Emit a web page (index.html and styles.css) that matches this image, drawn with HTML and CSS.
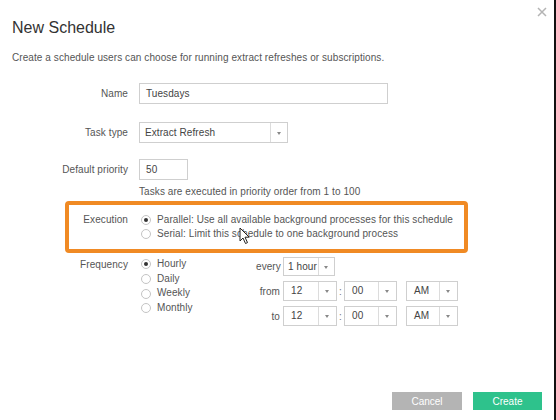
FILE: index.html
```html
<!DOCTYPE html>
<html>
<head>
<meta charset="utf-8">
<link rel="stylesheet" href="styles.css">
</head>
<body>
<div class="page">
  <button class="close" aria-label="Close">
    <svg width="10" height="10" viewBox="0 0 10 10"><path d="M1 1 L9 9 M9 1 L1 9" stroke="#b4b4b4" stroke-width="1.5"/></svg>
  </button>
  <header class="header">
    <h1 class="title">New Schedule</h1>
    <p class="desc">Create a schedule users can choose for running extract refreshes or subscriptions.</p>
  </header>

  <div class="form">
    <div class="row row-name">
      <span class="label">Name</span>
      <div class="input input-name">Tuesdays</div>
    </div>
    <div class="row row-task">
      <span class="label">Task type</span>
      <div class="sel sel-task"><span class="val">Extract Refresh</span><span class="arr"></span></div>
    </div>
    <div class="row row-prio">
      <span class="label">Default priority</span>
      <div class="input input-prio">50</div>
    </div>
    <div class="hint">Tasks are executed in priority order from 1 to 100</div>

    <div class="exec">
      <span class="label exec-label">Execution</span>
      <div class="radios">
        <div class="radio on"><span class="dot"></span>Parallel: Use all available background processes for this schedule</div>
        <div class="radio"><span class="dot"></span>Serial: Limit this schedule to one background process</div>
      </div>
    </div>

    <div class="row row-freq">
      <span class="label freq-label">Frequency</span>
      <div class="radios freq-radios">
        <div class="radio on"><span class="dot"></span>Hourly</div>
        <div class="radio"><span class="dot"></span>Daily</div>
        <div class="radio"><span class="dot"></span>Weekly</div>
        <div class="radio"><span class="dot"></span>Monthly</div>
      </div>
      <div class="times">
        <span class="tlabel">every</span>
        <div class="tcells">
          <div class="sel sel-every"><span class="val v-hour">1 hour</span><span class="arr"></span></div>
        </div>
        <span class="tlabel">from</span>
        <div class="tcells">
          <div class="sel sel-h"><span class="val">12</span><span class="arr"></span></div>
          <span class="colon">:</span>
          <div class="sel sel-m"><span class="val">00</span><span class="arr"></span></div>
          <div class="sel sel-ap"><span class="val">AM</span><span class="arr"></span></div>
        </div>
        <span class="tlabel">to</span>
        <div class="tcells">
          <div class="sel sel-h"><span class="val">12</span><span class="arr"></span></div>
          <span class="colon">:</span>
          <div class="sel sel-m"><span class="val">00</span><span class="arr"></span></div>
          <div class="sel sel-ap"><span class="val">AM</span><span class="arr"></span></div>
        </div>
      </div>
    </div>
  </div>

  <footer class="footer">
    <button class="btn btn-cancel">Cancel</button>
    <button class="btn btn-create">Create</button>
  </footer>

  <svg class="cursor" width="12" height="18" viewBox="0 0 12 18">
    <path d="M1 1 L1 14 L4 11 L6.5 16.5 L8.5 15.6 L6 10.2 L10.2 10.2 Z" fill="#fff" stroke="#222" stroke-width="1" stroke-linejoin="round"/>
  </svg>
</div>
</body>
</html>
```
FILE: styles.css
```css
* { box-sizing: border-box; }
html, body { margin: 0; padding: 0; background: #fff; }
.page {
  position: relative;
  width: 556px;
  height: 420px;
  border-right: 2px solid #111;
  display: flex;
  flex-direction: column;
  font-family: "Liberation Sans", Arial, sans-serif;
  font-size: 10px;
  letter-spacing: 0.08px;
  color: #555;
  background: #fff;
}
.close {
  position: absolute;
  top: 7px;
  right: 7px;
  border: 0;
  background: none;
  padding: 0;
  width: 10px;
  height: 10px;
  line-height: 0;
}
.header { padding: 18px 12px 0; }
.title {
  margin: 0;
  font-size: 16px;
  line-height: 20px;
  font-weight: normal;
  letter-spacing: 0;
  color: #333;
}
.desc {
  margin: 14px 0 0;
  line-height: 12px;
  color: #555;
}
.form { margin-top: 19px; }
.row { display: flex; align-items: center; }
.label {
  width: 128px;
  margin-right: 11px;
  text-align: right;
  flex: none;
  color: #555;
}
.input {
  height: 21px;
  border: 1px solid #cfcfcf;
  padding-left: 6px;
  line-height: 19px;
  color: #444;
}
.input-name { width: 249px; }
.input-prio { width: 49px; }
.row-task { margin-top: 18px; }
.row-prio { margin-top: 16px; }
.hint {
  margin: 6px 0 0 139px;
  line-height: 12px;
}
.sel {
  display: flex;
  height: 20px;
  border: 1px solid #cfcfcf;
  color: #444;
  background: #fff;
}
.sel .val {
  flex: 1;
  padding-left: 7px;
  line-height: 18px;
  white-space: nowrap;
}
.sel .arr {
  width: 17px;
  border-left: 1px solid #dcdcdc;
  position: relative;
}
.sel .arr::after {
  content: "";
  position: absolute;
  left: 50%;
  top: 50%;
  margin: -1px 0 0 -2.5px;
  border-left: 2.5px solid transparent;
  border-right: 2.5px solid transparent;
  border-top: 3px solid #888;
}
.sel-task { width: 149px; height: 21px; }
.sel-task .val { padding-left: 5px; line-height: 19px; }
.exec {
  margin: 3px 0 0 65px;
  width: 403px;
  border: 4px solid #f08a24;
  border-radius: 4px;
  padding: 8px 0 8px;
  display: flex;
  align-items: flex-start;
}
.exec-label { width: 59px; line-height: 14px; }
.radios { display: flex; flex-direction: column; }
.radio {
  display: flex;
  align-items: center;
  line-height: 14px;
  white-space: nowrap;
  color: #555;
}
.dot {
  width: 10px;
  height: 10px;
  margin: 0 6px 0 2px;
  border: 1px solid #c4c4c4;
  border-radius: 50%;
  position: relative;
  flex: none;
  background: #fff;
}
.radio.on .dot::after {
  content: "";
  position: absolute;
  left: 2px;
  top: 2px;
  width: 4px;
  height: 4px;
  border-radius: 50%;
  background: #333;
}
.row-freq { align-items: flex-start; margin-top: 4px; }
.freq-label { line-height: 15px; }
.freq-radios { width: 117px; flex: none; }
.freq-radios .radio { line-height: 14.7px; }
.times {
  display: grid;
  grid-template-columns: 24px auto;
  column-gap: 3px;
  row-gap: 5px;
  align-items: center;
  margin-top: 0;
}
.tlabel { text-align: right; color: #555; }
.tcells { display: flex; align-items: center; }
.sel-every { width: 52px; height: 19px; }
.sel-every .val { padding-left: 4px; line-height: 17px; }
.sel-every .arr { width: 16px; }
.sel-h { width: 54px; }
.sel-h .arr { width: 18px; }
.sel-m { width: 53px; }
.sel-m .arr { width: 18px; }
.sel-ap { width: 52px; margin-left: 9px; }
.sel-ap .arr { width: 18px; }
.colon { width: 7px; text-align: center; color: #777; }
.footer {
  margin-top: auto;
  display: flex;
  justify-content: flex-end;
  gap: 11px;
  padding: 0 12px 10px 0;
}
.btn {
  height: 18px;
  border: 0;
  padding: 0;
  color: #fff;
  font-family: "Liberation Sans", Arial, sans-serif;
  font-size: 10px;
}
.btn-cancel { width: 70px; background: #b4b4b4; }
.btn-create { width: 69px; background: #2ec28c; }
.cursor {
  position: absolute;
  left: 239px;
  top: 227px;
}
```
